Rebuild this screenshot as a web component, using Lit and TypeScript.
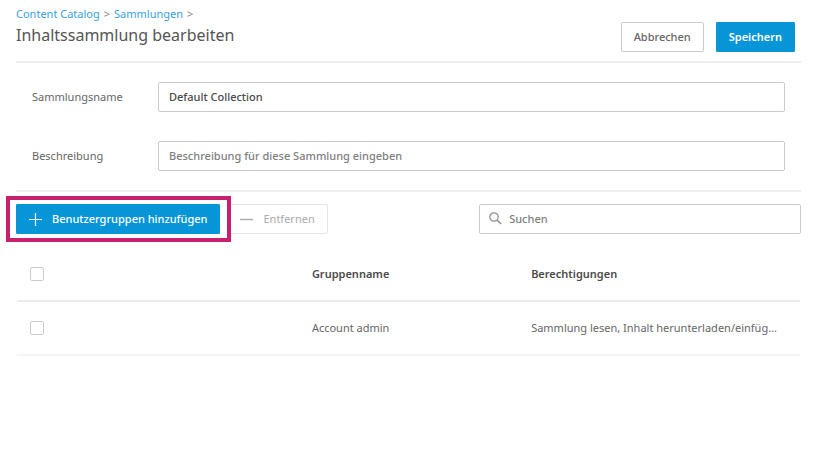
import { LitElement, html, css } from "lit";
import { customElement, state } from "lit/decorators.js";

interface Group {
  name: string;
  permissions: string;
}

@customElement("app-root")
export class AppRoot extends LitElement {
  @state() private groups: Group[] = [
    {
      name: "Account admin",
      permissions: "Sammlung lesen, Inhalt herunterladen/einfüg…",
    },
  ];

  static styles = css`
    :host {
      display: block;
      box-sizing: border-box;
      padding: 6px 15px 24px 16px;
      background: #fff;
      color: #666;
      font: 11px/16px "Noto Sans", sans-serif;
    }
    * {
      box-sizing: border-box;
    }
    button,
    input {
      font: inherit;
      color: inherit;
      margin: 0;
    }
    .header {
      display: flex;
      justify-content: space-between;
      align-items: flex-end;
      padding: 0 6px 9px 0;
      border-bottom: 2px solid #eee;
    }
    .heading {
      padding-bottom: 5px;
    }
    .crumbs {
      display: flex;
      gap: 4px;
      color: #888;
    }
    .crumbs a {
      color: #3a9fdf;
      text-decoration: none;
    }
    h1 {
      margin: 1px 0 0;
      font-size: 16px;
      line-height: 24px;
      font-weight: 400;
      color: #555;
    }
    .actions {
      display: flex;
      gap: 12px;
    }
    .btn {
      height: 30px;
      padding: 0 12px;
      border: 1px solid #ccc;
      border-radius: 2px;
      background: #fff;
      font-weight: 500;
      white-space: nowrap;
    }
    .btn.primary {
      border-color: #0696d7;
      border-radius: 1px;
      background: #0696d7;
      color: #fff;
      font-weight: 600;
    }
    .btn.icon {
      display: flex;
      align-items: center;
      gap: 10px;
      font-weight: 500;
    }
    .btn:disabled {
      border-color: #e5e5e5;
      color: #aaa;
      font-weight: 400;
    }
    .form {
      display: grid;
      grid-template-columns: 126px 1fr;
      align-items: center;
      row-gap: 29px;
      padding: 19px 16px;
      border-bottom: 2px solid #eee;
    }
    .field {
      width: 100%;
      height: 30px;
      padding: 0 10px 2px;
      border: 1px solid #ccc;
      border-radius: 2px;
      background: #fff;
      color: #4a4a4a;
      font-weight: 500;
      outline: none;
    }
    .field::placeholder {
      color: #808080;
      opacity: 1;
    }
    .toolbar {
      display: flex;
      justify-content: space-between;
      padding-top: 12px;
    }
    .group {
      display: flex;
      gap: 7px;
    }
    .marked {
      position: relative;
    }
    .marked::after {
      content: "";
      position: absolute;
      inset: -8px -11px -8px -10px;
      border: 4px solid #c8206f;
      pointer-events: none;
    }
    .search {
      position: relative;
      width: 41%;
    }
    .search svg {
      position: absolute;
      left: 10px;
      top: 8px;
    }
    .search .field {
      padding-left: 29px;
    }
    svg {
      display: block;
      fill: none;
      stroke: currentColor;
    }
    .search svg {
      color: #909090;
    }
    table {
      width: calc(100% - 2px);
      margin: 14px 1px 0;
      border-collapse: separate;
      border-spacing: 0;
      table-layout: fixed;
    }
    th,
    td {
      height: 54px;
      padding: 0 13px;
      text-align: left;
      font-weight: 400;
      border-bottom: 2px solid #f5f5f5;
      white-space: nowrap;
    }
    th {
      border-color: #ebebeb;
      font-weight: 600;
      color: #4a4a4a;
    }
    .outer {
      width: 36%;
    }
    .check {
      display: block;
      appearance: none;
      width: 14px;
      height: 14px;
      border: 1px solid #ccc;
      border-radius: 2px;
      background: #fff;
    }
    .check:checked {
      background: #0696d7;
    }
  `;

  render() {
    return html`
      <header class="header">
        <div class="heading">
          <nav class="crumbs">
            <a href="#catalog">Content Catalog</a><span>&gt;</span>
            <a href="#collections">Sammlungen</a><span>&gt;</span>
          </nav>
          <h1>Inhaltssammlung bearbeiten</h1>
        </div>
        <div class="actions">
          <button class="btn" type="button">Abbrechen</button>
          <button class="btn primary" type="button">Speichern</button>
        </div>
      </header>
      <form class="form">
        <label for="name">Sammlungsname</label>
        <input class="field" id="name" type="text" value="Default Collection" />
        <label for="description">Beschreibung</label>
        <input class="field" id="description" type="text" placeholder="Beschreibung für diese Sammlung eingeben" />
      </form>
      <div class="toolbar">
        <div class="group">
          <div class="marked">
            <button class="btn primary icon" type="button">
              <svg width="13" height="13" viewBox="0 0 13 13"><path d="M6.5 0v13M0 6.5h13" stroke-width="1.2" /></svg>
              Benutzergruppen hinzufügen
            </button>
          </div>
          <button class="btn icon" type="button" disabled>
            <svg width="13" height="13" viewBox="0 0 13 13"><path d="M0 6.5h13" stroke-width="1.4" /></svg>
            Entfernen
          </button>
        </div>
        <div class="search">
          <svg width="13" height="13" viewBox="0 0 13 13">
            <circle cx="5" cy="5" r="4.2" stroke-width="1.3" />
            <path d="M8 8l4.2 4" stroke-width="1.6" />
          </svg>
          <input class="field" type="search" placeholder="Suchen" aria-label="Suchen" />
        </div>
      </div>
      <table>
        <thead>
          <tr>
            <th class="outer"><input class="check" type="checkbox" aria-label="Alle Gruppen" /></th>
            <th>Gruppenname</th>
            <th class="outer">Berechtigungen</th>
          </tr>
        </thead>
        <tbody>
          ${this.groups.map(
            (g) => html`<tr>
              <td><input class="check" type="checkbox" aria-label=${g.name} /></td>
              <td>${g.name}</td>
              <td>${g.permissions}</td>
            </tr>`
          )}
        </tbody>
      </table>
    `;
  }
}
